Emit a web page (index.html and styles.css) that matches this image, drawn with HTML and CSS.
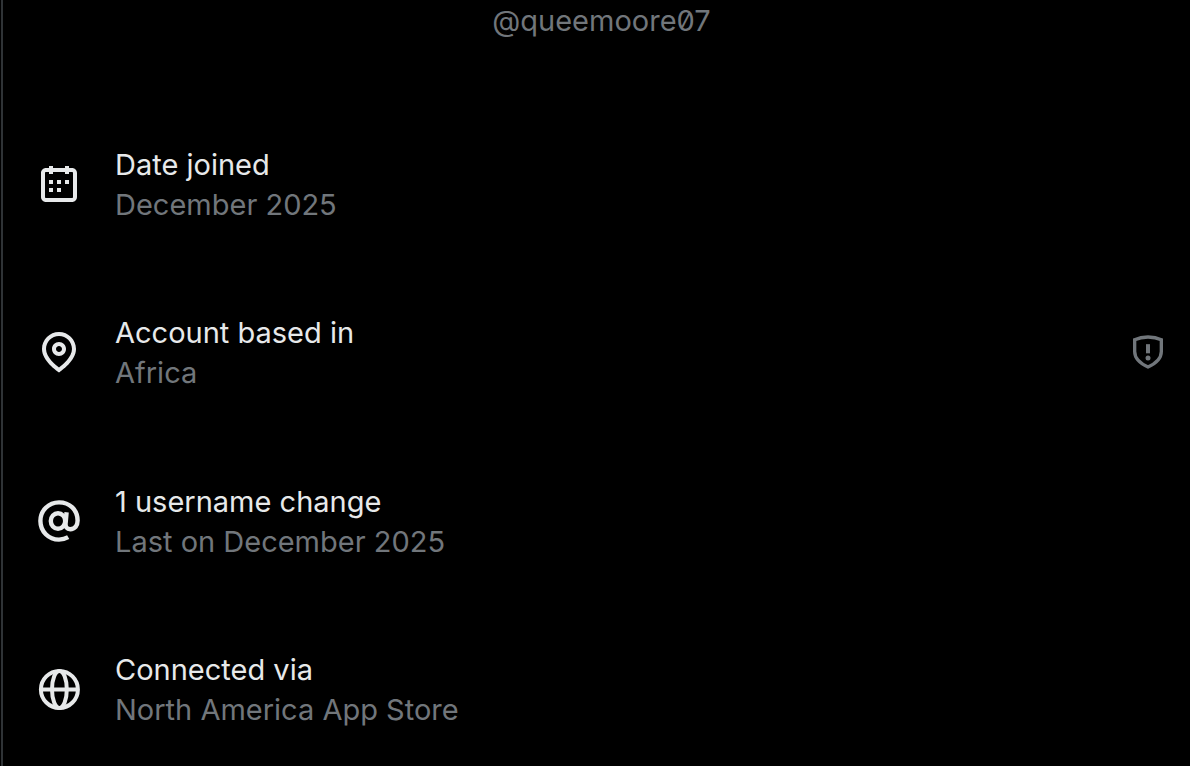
FILE: index.html
```
<!DOCTYPE html>
<html lang="en">
<head>
  <meta charset="UTF-8">
  <meta name="viewport" content="width=device-width, initial-scale=1.0">
  <title>About this account</title>
  <link rel="stylesheet" href="styles.css">
</head>
<body>
  <main class="about">
    <p class="handle">@queemoore07</p>

    <ul class="details">
      <li class="row">
        <svg class="icon" viewBox="0 0 24 24" aria-hidden="true"><path d="M7 4V3h2v1h6V3h2v1h1.5C19.89 4 21 5.12 21 6.5v12c0 1.38-1.11 2.5-2.5 2.5h-13C4.12 21 3 19.88 3 18.5v-12C3 5.12 4.12 4 5.5 4H7zm0 2H5.5c-.27 0-.5.22-.5.5v12c0 .28.23.5.5.5h13c.28 0 .5-.22.5-.5v-12c0-.28-.22-.5-.5-.5H17v1h-2V6H9v1H7V6zm0 6h2v-2H7v2zm0 4h2v-2H7v2zm4-4h2v-2h-2v2zm0 4h2v-2h-2v2zm4-4h2v-2h-2v2z"/></svg>
        <div class="text">
          <p class="label">Date joined</p>
          <p class="value">December 2025</p>
        </div>
      </li>
      <li class="row">
        <svg class="icon" viewBox="0 0 24 24" aria-hidden="true"><path d="M12 7c-1.93 0-3.5 1.57-3.5 3.5S10.07 14 12 14s3.5-1.57 3.5-3.5S13.93 7 12 7zm0 5c-.827 0-1.5-.673-1.5-1.5S11.173 9 12 9s1.5.673 1.5 1.5S12.827 12 12 12zm0-10c-4.687 0-8.5 3.813-8.5 8.5 0 5.967 7.621 11.116 7.945 11.332l.555.37.555-.37c.324-.216 7.945-5.365 7.945-11.332C20.5 5.813 16.687 2 12 2zm0 17.77c-1.665-1.241-6.5-5.196-6.5-9.27C5.5 6.916 8.416 4 12 4s6.5 2.916 6.5 6.5c0 4.073-4.835 8.028-6.5 9.27z"/></svg>
        <div class="text">
          <p class="label">Account based in</p>
          <p class="value">Africa</p>
        </div>
        <button class="notice" type="button" aria-label="Location may not be accurate">
          <svg class="shield" viewBox="0 0 24 24" aria-hidden="true">
            <path class="line" d="M12 3c2.9 0 5.6.5 8 1.600v7.1c0 4.300-3.600 7.300-8 9.300-4.400-2-8-5-8-9.300V4.600C6.400 3.500 9.100 3 12 3z"/>
            <path d="M10.800 7.300h2.400v5.500h-2.400z"/>
            <circle cx="12" cy="15.600" r="1.500"/>
          </svg>
        </button>
      </li>
      <li class="row">
        <svg class="icon" viewBox="0 0 24 24" aria-hidden="true">
          <ellipse class="line bold" cx="11.500" cy="12" rx="3.600" ry="3.900"/>
          <path class="line bold" d="M15.800 7.600l-.5 5.600c-.15 1.900.7 2.900 2.300 2.900 2.300 0 3.700-1.700 3.700-4.300C21.300 6.400 17.300 2.700 12 2.700c-5.200 0-9.300 4.100-9.300 9.300s4.100 9.300 9.300 9.300c1.700 0 3.200-.4 4.600-1.200"/>
        </svg>
        <div class="text">
          <p class="label">1 username change</p>
          <p class="value">Last on December 2025</p>
        </div>
      </li>
      <li class="row">
        <svg class="icon" viewBox="0 0 24 24" aria-hidden="true">
          <circle class="line" cx="12.200" cy="12.200" r="9.250"/>
          <ellipse class="line" cx="12.200" cy="12.200" rx="3.700" ry="9.250"/>
          <path class="line" d="M3 12.200h18.400"/>
        </svg>
        <div class="text">
          <p class="label">Connected via</p>
          <p class="value">North America App Store</p>
        </div>
      </li>
    </ul>
  </main>
</body>
</html>
```
FILE: styles.css
```
* {
  box-sizing: border-box;
}

body {
  margin: 0;
  background-color: #000;
  color: #e7e9ea;
  font-family: Inter, "Liberation Sans", sans-serif;
  font-size: 29px;
  line-height: 40px;
}

p {
  margin: 0;
}

.about {
  display: flex;
  flex-direction: column;
  min-height: 100vh;
  margin-left: 1px;
  padding: 1px 22px 36px 32px;
  border-left: 2px solid #2f3336;
}

.handle {
  color: #71767b;
  text-align: center;
  font-feature-settings: "zero";
}

.details {
  display: flex;
  flex: 1;
  flex-direction: column;
  justify-content: space-between;
  gap: 48px;
  margin: 0;
  padding: 104px 0 0;
  list-style: none;
}

.row {
  display: flex;
  align-items: center;
  gap: 32px;
}

.icon {
  flex: none;
  width: 48px;
  height: 48px;
  fill: #e7e9ea;
}

/* optical centring against the two text lines */
.icon,
.notice {
  margin-bottom: 2px;
}

.text {
  flex: 1;
}

.value {
  color: #71767b;
}

.line {
  fill: none;
  stroke: #e7e9ea;
  stroke-width: 2;
}

.bold {
  stroke-width: 2.2;
}

.notice {
  display: flex;
  padding: 0;
  border: 0;
  background: none;
  cursor: pointer;
}

.shield {
  width: 40px;
  height: 40px;
  fill: #71767b;
}

.shield .line {
  stroke: #71767b;
}
```
